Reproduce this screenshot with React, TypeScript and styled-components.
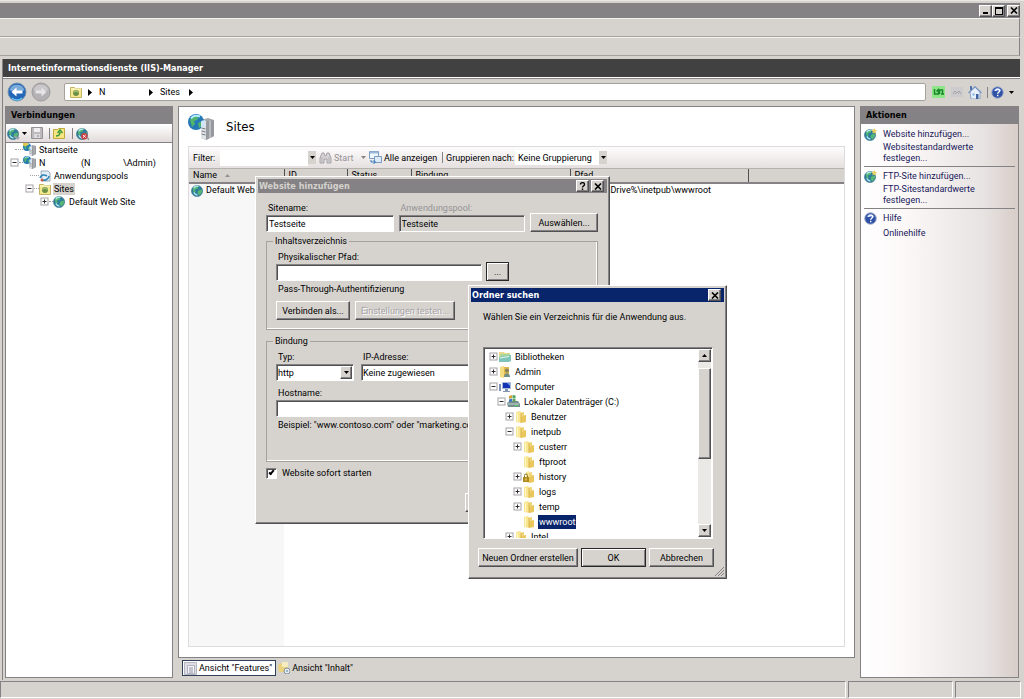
import React from 'react';
import styled, { createGlobalStyle, css } from 'styled-components';

const FACE = '#d6d3ce';
const SHADOW = '#848284';
const DARK = '#525152';
const TITLE_FONT = '"DejaVu Sans Condensed", "DejaVu Sans", sans-serif';

const Global = createGlobalStyle`
  *, *::before, *::after { box-sizing: border-box; }
  body { margin: 0; background: ${FACE}; }
  body, button, input, select, table {
    font-family: Roboto, "DejaVu Sans Condensed", sans-serif;
    font-size: 9px;
    line-height: 12px;
    color: #000;
  }
  a { color: inherit; text-decoration: none; }
`;

const raised = css`
  background: ${FACE};
  border: 1px solid;
  border-color: #fff ${DARK} ${DARK} #fff;
  box-shadow: inset -1px -1px 0 ${SHADOW};
`;

const sunken = css`
  border: 1px solid;
  border-color: ${SHADOW} #fff #fff ${SHADOW};
  box-shadow: inset 1px 1px 0 ${DARK};
`;

const Page = styled.div`
  position: relative;
  display: flex;
  flex-direction: column;
  min-height: 100vh;
  overflow: hidden;
  border-top: 1px solid #e8e6e2;
  background: ${FACE};
`;

const TitleBar = styled.header`
  display: flex;
  align-items: center;
  justify-content: flex-end;
  height: 15px;
  margin-top: 2px;
  margin-right: 4px;
  background: ${SHADOW};
`;

const CaptionButton = styled.button<{ $gap?: boolean }>`
  ${raised}
  display: grid;
  place-items: center;
  width: 13px;
  height: 12px;
  padding: 0;
  margin-left: ${p => (p.$gap ? 2 : 0)}px;
`;

const Band = styled.div`
  height: 19px;
  margin-right: 4px;
  border-top: 1px solid #f4f2ee;
  border-right: 1px solid ${SHADOW};
  border-bottom: 1px solid #a5a29c;
`;

const Manager = styled.main`
  display: flex;
  flex: 1;
  flex-direction: column;
  margin: 3px 4px 0 2px;
  border-left: 1px solid ${SHADOW};
`;

const ManagerTitle = styled.h1`
  height: 18px;
  margin: 0;
  padding-left: 5px;
  background: #424142;
  color: #fff;
  font-family: ${TITLE_FONT};
  font-size: 9px;
  line-height: 18px;
`;

const AddressRow = styled.div`
  display: flex;
  align-items: center;
  height: 29px;
  padding: 0 6px 0 4px;
  border-top: 1px solid #fff;
  box-shadow: inset 0 1px 0 ${SHADOW};
`;

const PlainButton = styled.button<{ $w?: number; $muted?: boolean }>`
  display: flex;
  align-items: center;
  gap: 2px;
  flex: none;
  width: ${p => (p.$w ? `${p.$w}px` : 'auto')};
  padding: 0;
  border: 0;
  background: none;
  color: ${p => (p.$muted ? '#949294' : '#000')};
  white-space: nowrap;
`;

const Breadcrumb = styled.nav`
  display: flex;
  flex: 1;
  align-items: center;
  height: 18px;
  margin: 0 6px 0 11px;
  padding-left: 5px;
  border: 1px solid #a5a29c;
  border-radius: 2px;
  background: #fff;
`;

const Crumb = styled.a<{ $w: number }>`
  width: ${p => p.$w}px;
  padding-left: 7px;
`;

const Columns = styled.div`
  display: flex;
  flex: 1;
  gap: 5px;
  padding: 0 1px 2px 2px;
`;

const SidePanel = styled.aside<{ $w: number; $shaded?: boolean }>`
  display: flex;
  flex: none;
  flex-direction: column;
  width: ${p => p.$w}px;
  border: 1px solid ${SHADOW};
  background: ${p =>
    p.$shaded ? 'linear-gradient(90deg, #fff 0%, #fcf8f8 28%, #e7e3e2 78%, #d8cdc8 100%)' : '#fff'};
`;

const PanelTitle = styled.h2`
  height: 17px;
  margin: 0;
  padding-left: 5px;
  background: ${SHADOW};
  font-family: ${TITLE_FONT};
  font-size: 9px;
  line-height: 17px;
`;

const PanelTools = styled.div`
  display: flex;
  align-items: center;
  gap: 3px;
  height: 19px;
  padding-left: 1px;
  border-bottom: 1px solid ${SHADOW};
  background: linear-gradient(#fff, #e2dbdb);
`;

const Separator = styled.span`
  width: 1px;
  height: 11px;
  background: ${SHADOW};
`;

const TreeList = styled.ul`
  margin: 0;
  padding: 0;
  list-style: none;
`;

const ConnRow = styled.li<{ $x: number }>`
  display: flex;
  align-items: center;
  height: 13px;
  padding-left: ${p => p.$x}px;
  white-space: pre;
`;

const ConnLabel = styled.span<{ $on?: boolean; $w?: number }>`
  width: ${p => (p.$w ? `${p.$w}px` : 'auto')};
  padding: 0 1px;
  background: ${p => (p.$on ? FACE : 'transparent')};
`;

const Dots = styled.span<{ $w: number }>`
  width: ${p => p.$w}px;
  border-top: 1px dotted #a5a2a5;
`;

const Center = styled.section`
  display: flex;
  flex: 1;
  flex-direction: column;
  min-width: 0;
`;

const Content = styled.div`
  display: flex;
  flex: 1;
  flex-direction: column;
  padding: 0 9px 10px 9px;
  border: 1px solid ${SHADOW};
  background: #fff;
`;

const Heading = styled.h2`
  display: flex;
  align-items: center;
  gap: 12px;
  height: 39px;
  margin: 0;
  font-family: ${TITLE_FONT};
  font-size: 13px;
  font-weight: 400;
  line-height: 16px;
`;

const Listing = styled.div`
  flex: 1;
  border: 1px solid #dedbde;
  background: linear-gradient(#f7f7f7, #f7f7f7) left / 95px 100% no-repeat #fff;
`;

const FilterBar = styled.div`
  display: flex;
  align-items: center;
  height: 21px;
  padding-left: 4px;
  background: linear-gradient(#fdfcfc, #e6e0e0);
  white-space: nowrap;
`;

const FilterLabel = styled.label<{ $w: number }>`
  width: ${p => p.$w}px;
`;

const FilterInput = styled.input`
  width: 88px;
  height: 16px;
  padding: 0 2px;
  border: 0;
  background: #fff;
`;

const DropCap = styled.span`
  display: grid;
  place-items: center;
  width: 8px;
  height: 13px;
  background: ${FACE};
`;

const Space = styled.span<{ $w: number }>`
  flex: none;
  width: ${p => p.$w}px;
`;

const FlatSelect = styled.select`
  appearance: none;
  width: 84px;
  height: 15px;
  padding: 0 3px;
  border: 0;
  background: #fff;
`;

const SitesTable = styled.table`
  width: 100%;
  border-collapse: collapse;
  table-layout: fixed;
  th {
    height: 14px;
    padding: 0 4px;
    border-top: 1px solid #b5b2ad;
    border-bottom: 2px solid ${SHADOW};
    background: ${FACE};
    font-weight: 400;
    text-align: left;
  }
  th + th { border-left: 1px solid ${DARK}; }
  td {
    height: 14px;
    padding: 0 4px;
    white-space: nowrap;
  }
  td:first-child { padding-left: 2px; }
`;

const Col = styled.col<{ $w?: number }>`
  width: ${p => (p.$w ? `${p.$w}px` : 'auto')};
`;

const WithIcon = styled.span`
  display: flex;
  align-items: center;
  gap: 2px;
`;

const ViewTabs = styled.div`
  display: flex;
  align-items: center;
  height: 20px;
  padding-left: 4px;
`;

const ViewTab = styled.button<{ $on?: boolean }>`
  display: flex;
  align-items: center;
  gap: 2px;
  height: 16px;
  padding: 0 3px 0 1px;
  border: 1px solid ${p => (p.$on ? '#31415a' : 'transparent')};
  background: ${p => (p.$on ? '#fff' : 'none')};
`;

const ActionGroup = styled.div`
  display: grid;
  grid-template-columns: 13px 1fr;
  align-items: center;
  column-gap: 6px;
  margin: 0 3px;
  padding: 4px 0 1px;
  color: #18185a;
  & + & {
    padding-top: 3px;
    border-top: 1px solid ${SHADOW};
  }
`;

const Action = styled.a<{ $tall?: boolean }>`
  grid-column: 2;
  max-width: 110px;
  padding: ${p => (p.$tall ? 3 : 1)}px 0;
  line-height: 11px;
`;

const StatusBar = styled.footer`
  display: grid;
  grid-template-columns: 1fr 105px 66px;
  gap: 2px;
  height: 17px;
  margin: 1px 3px 1px 0;
`;

const StatusCell = styled.div`
  border: 1px solid;
  border-color: ${SHADOW} #fff #fff ${SHADOW};
`;

const Dialog = styled.section<{ $x: number; $y: number; $w: number; $h: number }>`
  ${raised}
  position: absolute;
  left: ${p => p.$x}px;
  top: ${p => p.$y}px;
  width: ${p => p.$w}px;
  height: ${p => p.$h}px;
  padding: 2px;
`;

const DialogTitle = styled.h2<{ $active?: boolean }>`
  display: flex;
  align-items: center;
  height: 14px;
  margin: 0;
  padding: 0 3px 0 1px;
  background: ${p => (p.$active ? '#08246b' : SHADOW)};
  color: ${p => (p.$active ? '#fff' : '#d6d3ce')};
  font-family: ${TITLE_FONT};
  font-size: 9px;
  line-height: 14px;
`;

const Grow = styled.span`
  flex: 1;
`;

const SiteForm = styled.form`
  display: flex;
  flex-direction: column;
  padding: 8px 9px 0 8px;
`;

const FieldRow = styled.div<{ $gap: number }>`
  display: flex;
  align-items: flex-end;
  gap: ${p => p.$gap}px;
`;

const Field = styled.div<{ $w?: number; $off?: boolean; $below?: boolean }>`
  display: flex;
  flex-direction: column;
  width: ${p => (p.$w ? `${p.$w}px` : 'auto')};
  margin-top: ${p => (p.$below ? 5 : 0)}px;
  label {
    padding-left: 2px;
    color: ${p => (p.$off ? '#949294' : '#000')};
    line-height: 14px;
  }
`;

const TextInput = styled.input`
  ${sunken}
  width: 100%;
  height: 17px;
  padding: 0 2px;
  background: #fff;
  &:disabled { background: ${FACE}; color: #000; }
`;

const Combo = styled.div`
  ${sunken}
  display: flex;
  height: 17px;
  padding: 1px;
  background: #fff;
`;

const ComboSelect = styled.select`
  appearance: none;
  flex: 1;
  min-width: 0;
  padding: 0;
  border: 0;
  background: transparent;
`;

const ComboArrow = styled.span`
  ${raised}
  display: grid;
  place-items: center;
  width: 12px;
`;

const Button = styled.button<{ $w: number; $main?: boolean }>`
  ${raised}
  flex: none;
  width: ${p => p.$w}px;
  height: 19px;
  padding: 0;
  white-space: nowrap;
  ${p => p.$main && css`
    border-color: #292829;
    box-shadow: inset 1px 1px 0 #fff, inset -1px -1px 0 ${SHADOW};
  `}
  &:disabled { color: #a5a2a5; text-shadow: 1px 1px 0 #fff; }
`;

const Group = styled.fieldset<{ $h: number; $gap: number }>`
  height: ${p => p.$h}px;
  min-width: 0;
  margin: ${p => p.$gap}px 0 0;
  padding: 3px 9px 0;
  border: 1px solid #a5a29c;
  box-shadow: inset -1px -1px 0 #fff;
  legend {
    margin-left: -3px;
    padding: 0 2px;
    line-height: 12px;
  }
`;

const Note = styled.p`
  height: 20px;
  margin: 0;
  padding-left: 2px;
  line-height: 16px;
  white-space: nowrap;
`;

const CheckRow = styled.label`
  display: flex;
  align-items: center;
  gap: 5px;
  height: 22px;
`;

const CheckBox = styled.input`
  ${sunken}
  appearance: none;
  display: grid;
  place-items: center;
  width: 11px;
  height: 11px;
  margin: 0;
  background: #fff;
  &:checked::after {
    content: "";
    width: 3px;
    height: 6px;
    margin-bottom: 2px;
    border: solid #000;
    border-width: 0 2px 2px 0;
    transform: rotate(40deg);
  }
`;

const FormEnd = styled.div`
  display: flex;
  justify-content: flex-end;
  gap: 5px;
  padding-top: 9px;
`;

const BrowseBody = styled.div`
  padding: 0 11px 0 12px;
`;

const Prompt = styled.p`
  margin: 0;
  line-height: 30px;
  white-space: nowrap;
`;

const BrowseTree = styled.div`
  ${sunken}
  display: flex;
  height: 192px;
  margin-top: 15px;
  padding: 1px;
  overflow: hidden;
  background: #fff;
`;

const FolderRow = styled.li<{ $level: number }>`
  display: flex;
  align-items: center;
  height: 15px;
  padding-left: ${p => p.$level * 8 + 4}px;
`;

const FolderLabel = styled.span<{ $on?: boolean }>`
  margin-left: 3px;
  padding: 1px;
  background: ${p => (p.$on ? '#08246b' : 'transparent')};
  color: ${p => (p.$on ? '#fff' : '#000')};
`;

const ScrollBar = styled.div`
  display: flex;
  flex-direction: column;
  width: 13px;
  margin-left: auto;
  background: #ebe9e6;
`;

const ScrollButton = styled.button`
  ${raised}
  display: grid;
  place-items: center;
  height: 13px;
  padding: 0;
`;

const ScrollThumb = styled.div`
  ${raised}
  height: 91px;
  margin: 6px 0 auto;
`;

const BrowseButtons = styled.div`
  display: flex;
  justify-content: space-between;
  padding: 9px 10px 0 7px;
`;

const Grip = styled.svg`
  position: absolute;
  right: 2px;
  bottom: 2px;
`;

const Down = ({ color = '#000' }: { color?: string }) => (
  <svg width="5" height="3" viewBox="0 0 5 3"><path d="M0 0h5L2.5 3z" fill={color} /></svg>
);
const Up = ({ color = '#000' }: { color?: string }) => (
  <svg width="5" height="3" viewBox="0 0 5 3"><path d="M0 3h5L2.5 0z" fill={color} /></svg>
);
const Right = () => (
  <svg width="4" height="7" viewBox="0 0 4 7"><path d="M0 0l4 3.5L0 7z" /></svg>
);
const Close = () => (
  <svg width="8" height="7" viewBox="0 0 8 7"><path d="M1 .5l6 6M7 .5l-6 6" stroke="#000" strokeWidth="1.6" /></svg>
);

const PlusMinus = ({ open }: { open?: boolean }) => (
  <svg width="9" height="9" viewBox="0 0 9 9">
    <rect x="1" y="1" width="7" height="7" fill="#fff" stroke="#a5a2a5" />
    <path d={open ? 'M2.5 4.5h4' : 'M2.5 4.5h4M4.5 2.5v4'} stroke="#313031" />
  </svg>
);

const Globe = ({ size = 12, mark }: { size?: number; mark?: 'star' | 'stop' | 'plug' }) => (
  <svg width={size} height={size} viewBox="0 0 14 14">
    <circle cx="6.5" cy="7.5" r="6" fill="#2d7f9b" stroke="#356b86" strokeWidth=".6" />
    <path d="M2 5c1-3 4-4 6-3L7 5 4 6l1 2-2 1zM8 7l4-1c0 3-1 5-3 6L7 10z" fill="#58b774" />
    <path d="M3 4.500c1-2 3-2.600 5-2M3 9c1 2 2 3 4 3" stroke="#b9e9f0" strokeWidth="1.300" fill="none" />
    {mark === 'star' && <path d="M11 0l1 2 2 .5-1.500 1.500.5 2-2-1-2 1 .5-2L8 2.500 10 2z" fill="#e8cf62" />}
    {mark === 'stop' && <g><circle cx="9" cy="10" r="3.500" fill="#c63d42" /><path d="M7.500 8.500l3 3m0-3l-3 3" stroke="#fff" /><path d="M12 11l2 3" stroke="#8a9297" strokeWidth="1.500" /></g>}
    {mark === 'plug' && <path d="M8 10l4 3M11 13l2-2" stroke="#9aa3a8" strokeWidth="2" />}
  </svg>
);

const ServerIcon = ({ size = 13, star }: { size?: number; star?: boolean }) => (
  <svg width={size} height={size} viewBox="0 0 26 26">
    <path d="M13 6l7-2 6 2v16l-8 4-5-2z" fill="#a4a8ac" />
    <path d="M13 6l5 1v19l-5-2z" fill="#dfe3e6" />
    <path d="M18 7.500l8-1.500v16l-8 4z" fill="#96999d" />
    <path d="M22 6.500v17.500" stroke="#b9bcbf" strokeWidth="2" />
    <path d="M13.500 14l4 1m-4 2l4 1m-4 2l4 1" stroke="#777d82" />
    <circle cx="8" cy="8" r="8" fill="#2478b5" />
    <path d="M2 6c2-4 6-5 9-4L9 6 6 7l1 3-3 3zM10 9l5-2c0 4-2 6-4 7z" fill="#51b46d" />
    <path d="M3 4.500c2-3 6-3.500 9-2" stroke="#b6ecff" strokeWidth="2" fill="none" />
    <path d="M13 7l4-1v6l-4 2z" fill="#cfe6fa" />
    {star && <path d="M0 0h9l2 3-5 3-6-1z" fill="#e9c64f" />}
  </svg>
);

const SitesIcon = () => (
  <svg width="12" height="12" viewBox="0 0 12 12">
    <path d="M.5 1.500h4l1 1h6v9H.5z" fill="#f4e991" stroke="#c3b263" />
    <path d="M1 3h10" stroke="#fffbd0" />
    <circle cx="6" cy="7" r="3" fill="#6b8f45" /><path d="M4 6.500c1-2 3-2 4 0" stroke="#d2e79c" fill="none" />
  </svg>
);

const PoolIcon = () => (
  <svg width="12" height="12" viewBox="0 0 12 12">
    <path d="M2 1h7l2 2v8H3z" fill="#e5eef7" stroke="#94a8bd" />
    <path d="M1 8c1-3 4-4 7-2M10 6c0 3-4 5-7 4" stroke="#2f86b7" strokeWidth="1.600" fill="none" />
    <circle cx="3" cy="10" r="1.500" fill="#c95e50" />
  </svg>
);

const Folder = () => (
  <svg width="12" height="12" viewBox="0 0 12 12">
    <path d="M1 1l4-1 1 1v11l-5-1z" fill="#f9e693" />
    <path d="M6 5l5-1v7l-5 1z" fill="#e9c75c" />
    <path d="M6 1.500l3-.5v4l-3 1z" fill="#f0d67a" />
    <path d="M2.500 2v8.500" stroke="#fff6c9" />
    <path d="M6 2v9.500" stroke="#d9b44a" />
  </svg>
);

const LockedFolder = () => (
  <svg width="12" height="12" viewBox="0 0 12 12">
    <path d="M3 1l3-1v12l-3-1z" fill="#f9e693" /><path d="M6 5l5-1v7l-5 1z" fill="#e9c75c" /><path d="M6 1.500l3-.5v4l-3 1z" fill="#f0d67a" />
    <rect x="0" y="6" width="6" height="5" fill="#b08a1c" /><path d="M1.500 6V4.500a1.500 1.500 0 013 0V6" stroke="#8a7326" fill="none" />
    <path d="M3 7.500v2" stroke="#f8e697" />
  </svg>
);

const Library = () => (
  <svg width="12" height="12" viewBox="0 0 12 12">
    <path d="M0 1h5l1 1h5v5H0z" fill="#ead98c" /><path d="M1 3h10v4H1z" fill="#a9d69b" />
    <path d="M0 6l12-2v6l-2 1H0z" fill="#7fc4bb" /><path d="M1 7l9-1.500" stroke="#e2f7ee" />
  </svg>
);

const UserFolder = () => (
  <svg width="12" height="12" viewBox="0 0 12 12">
    <path d="M1 1l4-1v12l-4-1z" fill="#f4dc80" /><path d="M5 1h5v10H5z" fill="#dfbb4c" />
    <circle cx="8" cy="4.500" r="2" fill="#87815f" /><path d="M5 11c0-5 6-5 6 0z" fill="#6f8f86" />
  </svg>
);

const ComputerIcon = () => (
  <svg width="12" height="12" viewBox="0 0 12 12">
    <rect x="3" y="1" width="9" height="7" fill="#a9bbd6" /><rect x="4" y="2" width="7" height="5" fill="#1335b4" />
    <path d="M8 2h3v3z" fill="#6f92e6" />
    <path d="M6 8h3v2h2v1H4v-1h2z" fill="#8596b3" /><path d="M0 3h2v7H0z" fill="#7f93b8" />
  </svg>
);

const DriveIcon = () => (
  <svg width="13" height="13" viewBox="0 0 13 13">
    <path d="M0 8l3-2h8l2 3v3H1z" fill="#75908f" /><path d="M1 9h11" stroke="#c8d6d4" />
    <path d="M8 10.500h3" stroke="#55d364" /><path d="M2 1l3-1v3L2 4z" fill="#d6a035" /><path d="M5.500 0l3 .5v3l-3-.5z" fill="#4ca45c" />
    <path d="M2 4.500l3-1v3l-3 .5z" fill="#3f77c9" /><path d="M5.500 3.500l3 .5v3l-3-.5z" fill="#5fa05c" />
  </svg>
);

const HelpIcon = () => (
  <svg width="13" height="13" viewBox="0 0 13 13">
    <circle cx="6.500" cy="6.500" r="5.800" fill="#2f52a7" stroke="#a7b2cb" />
    <path d="M2.500 5C4 1 9 1 10.500 5z" fill="#7d9bdc" />
    <path d="M4.700 5c0-2.600 4-2.400 4-.3 0 1.500-2 1.500-2 3M6.700 8.800v1.500" stroke="#fff" strokeWidth="1.400" fill="none" />
  </svg>
);

const NavArrow = ({ back }: { back?: boolean }) => (
  <svg width="20" height="20" viewBox="0 0 20 20">
    <circle cx="10" cy="10" r="9" fill={back ? '#2367b8' : '#b3b1b3'} stroke={back ? '#7790ad' : '#9c9a9c'} />
    <path d="M2.500 8a8 8 0 0115 0c-4 2-11 2-15 0z" fill={back ? '#7bacd9' : '#cac8ca'} />
    {back && <path d="M5 16c3 2.500 7 2.500 10 0" stroke="#63c3f2" strokeWidth="1.500" fill="none" />}
    <path d={back ? 'M4.500 10l5-4.500v3h6v3h-6v3z' : 'M15.500 10l-5-4.500v3h-6v3h6v3z'} fill={back ? '#fff' : '#e6e4e6'} />
  </svg>
);

const SaveIcon = () => (
  <svg width="12" height="12" viewBox="0 0 12 12">
    <path d="M.5.5h11v11H.5z" fill="#bdbabd" stroke="#949294" /><path d="M3 1h6v4H3z" fill="#efefef" /><path d="M3 7h6v4H3z" fill="#dedbde" /><path d="M7 8v2" stroke="#848284" />
  </svg>
);

const UpFolder = () => (
  <svg width="12" height="12" viewBox="0 0 12 12">
    <path d="M.5 2.500h4l1-1h6v10H.5z" fill="#f5e583" stroke="#c0a93f" />
    <path d="M3 9c3 0 4-2 4-4M4.500 6L7 3l2.500 3" stroke="#3d9a3b" strokeWidth="1.500" fill="none" />
  </svg>
);

const RefreshIcon = () => (
  <svg width="13" height="12" viewBox="0 0 13 12">
    <rect x="0" y="0" width="13" height="12" rx="1" fill="#8fe487" />
    <path d="M2.500 3v5h4V5M4.500 5.500L6.500 3.500l1 1.500M10.500 8V4h-3v4M9 8h3" stroke="#16882a" strokeWidth="1.500" fill="none" />
  </svg>
);

const StopIcon = () => (
  <svg width="12" height="10" viewBox="0 0 12 10">
    <rect width="12" height="10" fill="#cecbce" /><path d="M2 7l2-3 2 2 2-2 2 3M4 7l2-2 2 2" stroke="#a5a2a5" fill="none" />
  </svg>
);

const HomeIcon = () => (
  <svg width="14" height="13" viewBox="0 0 14 13">
    <path d="M2 6l5-5 5 5v7H3z" fill="#e7effa" stroke="#8ba3c8" /><path d="M.5 7L7 .8 13.500 7" stroke="#7d97c2" strokeWidth="1.400" fill="none" />
    <path d="M2 0h2v4H2z" fill="#5574ac" /><path d="M8 8h2.500v5H8z" fill="#40629e" /><path d="M4.500 7.500h2v2h-2z" fill="#7aaee0" />
  </svg>
);

const Binoculars = () => (
  <svg width="13" height="12" viewBox="0 0 13 12">
    <path d="M1 6l2-5h2l1 3h1l1-3h2l2 5v5H8V7H5v4H1z" fill="#d6d3d6" stroke="#a5a2a5" />
    <path d="M3 5v5M10 5v5" stroke="#b5b2b5" />
  </svg>
);

const ShowAllIcon = () => (
  <svg width="13" height="13" viewBox="0 0 13 13">
    <path d="M.5.5h9v7h-9z" fill="#eff6fc" stroke="#7b9cc0" /><path d="M1 1.500h8" stroke="#9ab9dc" strokeWidth="2" />
    <path d="M5.500 5.500h7v6h-7z" fill="#dceaf7" stroke="#7b9cc0" /><path d="M2 9v2h4M4.500 9l2 2-2 2" stroke="#3776ba" fill="none" />
  </svg>
);

const FeatureViewIcon = () => (
  <svg width="13" height="13" viewBox="0 0 13 13">
    <path d="M.5.5h12v12H.5z" fill="#dedfe6" stroke="#b5b6c2" /><path d="M3.500 3.500h7v8h-7z" fill="#f7f7fa" stroke="#b0b2c0" />
    <path d="M5 6h4M5 8h4M5 10h4" stroke="#8a90a5" />
  </svg>
);

const ContentViewIcon = () => (
  <svg width="12" height="12" viewBox="0 0 12 12">
    <path d="M0 3l4-2 1 2h5v7H1z" fill="#ead37c" /><path d="M4 0h6v5H4z" fill="#f6ecc0" />
    <circle cx="9" cy="9" r="3" fill="#e7edf0" stroke="#84929c" /><path d="M8 9h2" stroke="#54809a" />
  </svg>
);

type FolderItem = { level: number; name: string; state?: 'open' | 'closed'; icon?: React.ReactNode; on?: boolean };
const folders: FolderItem[] = [
  { level: 0, name: 'Bibliotheken', state: 'closed', icon: <Library /> },
  { level: 0, name: 'Admin', state: 'closed', icon: <UserFolder /> },
  { level: 0, name: 'Computer', state: 'open', icon: <ComputerIcon /> },
  { level: 1, name: 'Lokaler Datenträger (C:)', state: 'open', icon: <DriveIcon /> },
  { level: 2, name: 'Benutzer', state: 'closed' },
  { level: 2, name: 'inetpub', state: 'open' },
  { level: 3, name: 'custerr', state: 'closed' },
  { level: 3, name: 'ftproot' },
  { level: 3, name: 'history', state: 'closed', icon: <LockedFolder /> },
  { level: 3, name: 'logs', state: 'closed' },
  { level: 3, name: 'temp', state: 'closed' },
  { level: 3, name: 'wwwroot', on: true },
  { level: 2, name: 'Intel', state: 'closed' },
];

function Connections() {
  return (
    <SidePanel $w={168}>
      <PanelTitle>Verbindungen</PanelTitle>
      <PanelTools>
        <PlainButton $w={21} aria-label="Verbinden"><Globe size={13} mark="plug" /><Down /></PlainButton>
        <PlainButton $w={15} aria-label="Speichern"><SaveIcon /></PlainButton>
        <Separator />
        <PlainButton $w={16} aria-label="Aufwärts"><UpFolder /></PlainButton>
        <Separator />
        <PlainButton aria-label="Trennen"><Globe size={13} mark="stop" /></PlainButton>
      </PanelTools>
      <TreeList>
        <ConnRow $x={9}><Dots $w={8} /><ServerIcon star /><Space $w={2} /><ConnLabel>Startseite</ConnLabel></ConnRow>
        <ConnRow $x={4}><PlusMinus open /><Dots $w={4} /><ServerIcon /><Space $w={2} /><ConnLabel $w={42}>N</ConnLabel><ConnLabel $w={42}>(N</ConnLabel><ConnLabel>\Admin)</ConnLabel></ConnRow>
        <ConnRow $x={24}><Dots $w={9} /><PoolIcon /><Space $w={2} /><ConnLabel>Anwendungspools</ConnLabel></ConnRow>
        <ConnRow $x={19}><PlusMinus open /><Dots $w={5} /><SitesIcon /><Space $w={2} /><ConnLabel $on>Sites</ConnLabel></ConnRow>
        <ConnRow $x={34}><PlusMinus /><Dots $w={4} /><Globe size={13} /><Space $w={2} /><ConnLabel>Default Web Site</ConnLabel></ConnRow>
      </TreeList>
    </SidePanel>
  );
}

function Sites() {
  return (
    <Center>
      <Content>
        <Heading><ServerIcon size={26} />Sites</Heading>
        <Listing>
          <FilterBar>
            <FilterLabel $w={27} htmlFor="filter">Filter:</FilterLabel>
            <FilterInput id="filter" />
            <DropCap><Down /></DropCap>
            <Space $w={3} />
            <PlainButton $w={47} $muted><Binoculars />Start<Grow /><Down color="#848284" /></PlainButton>
            <Space $w={3} />
            <PlainButton $w={73}><ShowAllIcon />Alle anzeigen</PlainButton>
            <Separator />
            <Space $w={3} />
            <FilterLabel $w={69} htmlFor="grouping">Gruppieren nach:</FilterLabel>
            <FlatSelect id="grouping"><option>Keine Gruppierung</option></FlatSelect>
            <DropCap><Down /></DropCap>
          </FilterBar>
          <SitesTable>
            <colgroup><Col $w={95} /><Col $w={63} /><Col $w={64} /><Col $w={159} /><Col $w={178} /><Col /></colgroup>
            <thead>
              <tr><th><WithIcon>Name<Space $w={4} /><Up color="#949294" /></WithIcon></th><th>ID</th><th>Status</th><th>Bindung</th><th>Pfad</th><th /></tr>
            </thead>
            <tbody>
              <tr><td><WithIcon><Globe size={13} />Default Web Site</WithIcon></td><td /><td /><td /><td>%SystemDrive%\inetpub\wwwroot</td><td /></tr>
            </tbody>
          </SitesTable>
        </Listing>
      </Content>
      <ViewTabs>
        <ViewTab $on><FeatureViewIcon />Ansicht "Features"</ViewTab>
        <ViewTab><ContentViewIcon />Ansicht "Inhalt"</ViewTab>
      </ViewTabs>
    </Center>
  );
}

function Actions() {
  return (
    <SidePanel $w={159} $shaded>
      <PanelTitle>Aktionen</PanelTitle>
      <ActionGroup>
        <Globe size={13} mark="star" />
        <Action href="#">Website hinzufügen...</Action>
        <Action href="#">Websitestandardwerte festlegen...</Action>
      </ActionGroup>
      <ActionGroup>
        <Globe size={13} mark="star" />
        <Action href="#">FTP-Site hinzufügen...</Action>
        <Action href="#">FTP-Sitestandardwerte festlegen...</Action>
      </ActionGroup>
      <ActionGroup>
        <HelpIcon />
        <Action href="#">Hilfe</Action>
        <Action href="#" $tall>Onlinehilfe</Action>
      </ActionGroup>
    </SidePanel>
  );
}

function AddSiteDialog() {
  return (
    <Dialog $x={255} $y={175} $w={355} $h={348} role="dialog" aria-labelledby="add-title">
      <DialogTitle id="add-title">
        Website hinzufügen<Grow />
        <CaptionButton aria-label="Hilfe">
          <svg width="7" height="8" viewBox="0 0 7 8"><path d="M1.500 2.500c0-2.500 4-2.500 4 0 0 1.500-2 1.500-2 3M3.500 6.500V8" stroke="#000" strokeWidth="1.400" fill="none" /></svg>
        </CaptionButton>
        <CaptionButton $gap aria-label="Schließen"><Close /></CaptionButton>
      </DialogTitle>
      <SiteForm>
        <FieldRow $gap={5}>
          <Field $w={128}><label htmlFor="site">Sitename:</label><TextInput id="site" defaultValue="Testseite" /></Field>
          <Field $w={127} $off><label htmlFor="pool">Anwendungspool:</label><TextInput id="pool" disabled defaultValue="Testseite" /></Field>
          <Button type="button" $w={68}>Auswählen...</Button>
        </FieldRow>
        <Group $h={95} $gap={3}>
          <legend>Inhaltsverzeichnis</legend>
          <FieldRow $gap={4}>
            <Field $w={206}><label htmlFor="path">Physikalischer Pfad:</label><TextInput id="path" /></Field>
            <Button type="button" $w={23} $main>...</Button>
          </FieldRow>
          <Note>Pass-Through-Authentifizierung</Note>
          <FieldRow $gap={5}>
            <Button type="button" $w={74}>Verbinden als...</Button>
            <Button type="button" $w={100} disabled>Einstellungen testen...</Button>
          </FieldRow>
        </Group>
        <Group $h={127} $gap={5}>
          <legend>Bindung</legend>
          <FieldRow $gap={7}>
            <Field $w={78}>
              <label htmlFor="type">Typ:</label>
              <Combo><ComboSelect id="type"><option>http</option></ComboSelect><ComboArrow><Down /></ComboArrow></Combo>
            </Field>
            <Field $w={160}>
              <label htmlFor="ip">IP-Adresse:</label>
              <Combo><ComboSelect id="ip"><option>Keine zugewiesen</option></ComboSelect><ComboArrow><Down /></ComboArrow></Combo>
            </Field>
          </FieldRow>
          <Field $below><label htmlFor="host">Hostname:</label><TextInput id="host" /></Field>
          <Note>Beispiel: "www.contoso.com" oder "marketing.contoso.com"</Note>
        </Group>
        <CheckRow><CheckBox type="checkbox" defaultChecked />Website sofort starten</CheckRow>
        <FormEnd><Button type="button" $w={64} aria-label="OK" /><Button type="button" $w={64} aria-label="Abbrechen" /></FormEnd>
      </SiteForm>
    </Dialog>
  );
}

function BrowseDialog() {
  return (
    <Dialog $x={468} $y={284} $w={259} $h={294} role="dialog" aria-labelledby="browse-title">
      <DialogTitle id="browse-title" $active>Ordner suchen<Grow /><CaptionButton aria-label="Schließen"><Close /></CaptionButton></DialogTitle>
      <BrowseBody>
        <Prompt>Wählen Sie ein Verzeichnis für die Anwendung aus.</Prompt>
        <BrowseTree>
          <TreeList>
            {folders.map(f => (
              <FolderRow key={f.name} $level={f.level}>
                {f.state ? <PlusMinus open={f.state === 'open'} /> : <Space $w={9} />}
                <Space $w={1} />
                {f.icon ?? <Folder />}
                <FolderLabel $on={f.on}>{f.name}</FolderLabel>
              </FolderRow>
            ))}
          </TreeList>
          <ScrollBar>
            <ScrollButton aria-label="Nach oben"><Up /></ScrollButton>
            <ScrollThumb />
            <ScrollButton aria-label="Nach unten"><Down /></ScrollButton>
          </ScrollBar>
        </BrowseTree>
      </BrowseBody>
      <BrowseButtons>
        <Button $w={100}>Neuen Ordner erstellen</Button>
        <Button $w={65} $main>OK</Button>
        <Button $w={65}>Abbrechen</Button>
      </BrowseButtons>
      <Grip width="9" height="9" viewBox="0 0 9 9"><path d="M9 0L0 9M9 3L3 9M9 6L6 9" stroke="#848284" /></Grip>
    </Dialog>
  );
}

export default function App() {
  return (
    <Page>
      <Global />
      <TitleBar>
        <CaptionButton aria-label="Minimieren"><svg width="7" height="7"><path d="M1 5h5v2H1z" /></svg></CaptionButton>
        <CaptionButton aria-label="Maximieren"><svg width="8" height="8"><path d="M0 0h8v8H0zM1 2v5h6V2z" fillRule="evenodd" /></svg></CaptionButton>
        <CaptionButton $gap aria-label="Schließen"><Close /></CaptionButton>
      </TitleBar>
      <Band />
      <Band />
      <Manager>
        <ManagerTitle>Internetinformationsdienste (IIS)-Manager</ManagerTitle>
        <AddressRow>
          <PlainButton $w={24} aria-label="Zurück"><NavArrow back /></PlainButton>
          <PlainButton $w={22} aria-label="Vorwärts"><NavArrow /></PlainButton>
          <Breadcrumb>
            <SitesIcon /><Space $w={6} /><Right />
            <Crumb href="#" $w={57}>N</Crumb><Right />
            <Crumb href="#" $w={36}>Sites</Crumb><Right />
          </Breadcrumb>
          <PlainButton $w={19} aria-label="Aktualisieren"><RefreshIcon /></PlainButton>
          <PlainButton $w={17} aria-label="Anhalten"><StopIcon /></PlainButton>
          <PlainButton $w={19} aria-label="Startseite"><HomeIcon /></PlainButton>
          <Separator />
          <Space $w={3} />
          <PlainButton aria-label="Hilfe"><HelpIcon /><Space $w={1} /><Down /></PlainButton>
        </AddressRow>
        <Columns>
          <Connections />
          <Sites />
          <Actions />
        </Columns>
      </Manager>
      <StatusBar><StatusCell /><StatusCell /><StatusCell /></StatusBar>
      <AddSiteDialog />
      <BrowseDialog />
    </Page>
  );
}
